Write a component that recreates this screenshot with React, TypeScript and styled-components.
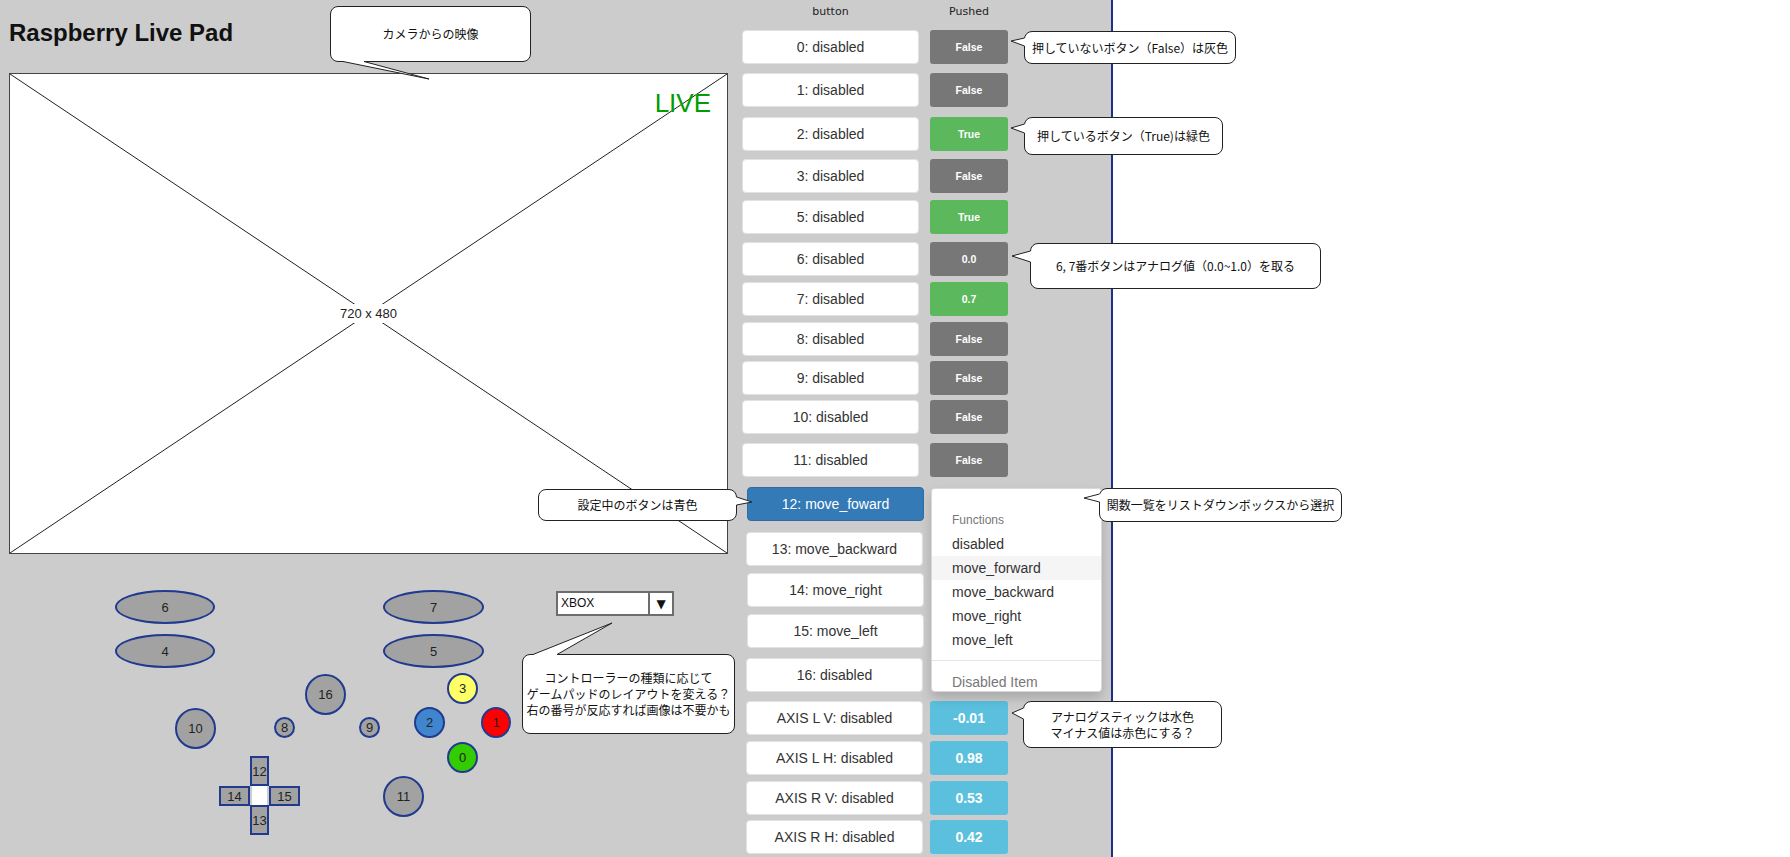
import React from "react";
import styled, { createGlobalStyle } from "styled-components";

const GlobalStyle = createGlobalStyle`
  html, body {
    margin: 0;
    padding: 0;
    background: #fff;
  }
  body {
    font-family: "Liberation Sans", Arial, sans-serif;
    overflow: hidden;
  }
`;

type Kind = "off" | "on" | "axis";
type Row = { label: string; mt: number; shift?: number; active?: boolean; value?: string; kind?: Kind };

const rows: Row[] = [
    { label: "0: disabled", mt: 11, value: "False", kind: "off" },
    { label: "1: disabled", mt: 9, value: "False", kind: "off" },
    { label: "2: disabled", mt: 10, value: "True", kind: "on" },
    { label: "3: disabled", mt: 8, value: "False", kind: "off" },
    { label: "5: disabled", mt: 7, value: "True", kind: "on" },
    { label: "6: disabled", mt: 8, value: "0.0", kind: "off" },
    { label: "7: disabled", mt: 6, value: "0.7", kind: "on" },
    { label: "8: disabled", mt: 6, value: "False", kind: "off" },
    { label: "9: disabled", mt: 5, value: "False", kind: "off" },
    { label: "10: disabled", mt: 5, value: "False", kind: "off" },
    { label: "11: disabled", mt: 9, value: "False", kind: "off" },
    { label: "12: move_foward", mt: 10, shift: 5, active: true },
    { label: "13: move_backward", mt: 11, shift: 4 },
    { label: "14: move_right", mt: 7, shift: 5 },
    { label: "15: move_left", mt: 7, shift: 5 },
    { label: "16: disabled", mt: 10, shift: 4 },
    { label: "AXIS L V: disabled", mt: 9, shift: 4, value: "-0.01", kind: "axis" },
    { label: "AXIS L H: disabled", mt: 6, shift: 4, value: "0.98", kind: "axis" },
    { label: "AXIS R V: disabled", mt: 6, shift: 4, value: "0.53", kind: "axis" },
    { label: "AXIS R H: disabled", mt: 5, shift: 4, value: "0.42", kind: "axis" },
];

const functions = ["disabled", "move_forward", "move_backward", "move_right", "move_left"];

type PadButton = { label: string; x: number; y: number; w: number; h: number; round: boolean; fill?: string };

// positions on the pad drawing, relative to the pad canvas
const padButtons: PadButton[] = [
    { label: "6", x: 106, y: 36, w: 100, h: 34, round: true },
    { label: "4", x: 106, y: 80, w: 100, h: 34, round: true },
    { label: "7", x: 374, y: 36, w: 101, h: 34, round: true },
    { label: "5", x: 374, y: 80, w: 101, h: 34, round: true },
    { label: "16", x: 296, y: 120, w: 41, h: 41, round: true },
    { label: "10", x: 166, y: 154, w: 41, h: 41, round: true },
    { label: "8", x: 265, y: 163, w: 21, h: 21, round: true },
    { label: "9", x: 350, y: 163, w: 21, h: 21, round: true },
    { label: "3", x: 438, y: 119, w: 31, h: 31, round: true, fill: "#ffff66" },
    { label: "2", x: 405, y: 153, w: 31, h: 31, round: true, fill: "#3f86cf" },
    { label: "1", x: 472, y: 153, w: 30, h: 31, round: true, fill: "#ff0000" },
    { label: "0", x: 438, y: 188, w: 31, h: 31, round: true, fill: "#33cc00" },
    { label: "11", x: 374, y: 222, w: 41, h: 41, round: true },
    { label: "12", x: 241, y: 202, w: 19, h: 30, round: false },
    { label: "14", x: 210, y: 232, w: 31, h: 20, round: false },
    { label: "15", x: 260, y: 232, w: 31, h: 20, round: false },
    { label: "13", x: 241, y: 251, w: 19, h: 30, round: false },
];

type Side = "left" | "right" | "top" | "bottom";
type Tail = { side: Side; a: number; b: number; tip: [number, number] };
type Note = { text: string; x: number; y: number; w: number; h: number; tail: Tail };

const notes: Note[] = [
    { text: "カメラからの映像", x: 330, y: 6, w: 201, h: 56, tail: { side: "bottom", a: 13, b: 34, tip: [99, 73] } },
    { text: "押していないボタン（False）は灰色", x: 1024, y: 31, w: 212, h: 33, tail: { side: "left", a: 7, b: 15, tip: [-13, 10] } },
    { text: "押しているボタン（True)は緑色", x: 1024, y: 117, w: 199, h: 38, tail: { side: "left", a: 7, b: 16, tip: [-13, 11] } },
    { text: "6, 7番ボタンはアナログ値（0.0~1.0）を取る", x: 1030, y: 243, w: 291, h: 46, tail: { side: "left", a: 8, b: 19, tip: [-18, 13] } },
    { text: "設定中のボタンは青色", x: 538, y: 489, w: 199, h: 32, tail: { side: "right", a: 8, b: 16, tip: [214, 13] } },
    { text: "関数一覧をリストダウンボックスから選択", x: 1099, y: 488, w: 243, h: 34, tail: { side: "left", a: 6, b: 14, tip: [-15, 10] } },
    {
        text: "コントローラーの種類に応じて\nゲームパッドのレイアウトを変える？\n右の番号が反応すれば画像は不要かも",
        x: 522, y: 654, w: 213, h: 80,
        tail: { side: "top", a: 11, b: 35, tip: [90, -31] },
    },
    { text: "アナログスティックは水色\nマイナス値は赤色にする？", x: 1023, y: 701, w: 199, h: 47, tail: { side: "left", a: 7, b: 18, tip: [-11, 12] } },
];

const pts = (list: number[][]) => list.map(p => p.join(",")).join(" ");

const NoteTail = ({ tail, w, h }: { tail: Tail; w: number; h: number }) => {
    let p1: number[], p2: number[], d: number[];
    if (tail.side === "left") { p1 = [0.5, tail.a]; p2 = [0.5, tail.b]; d = [2, 0]; }
    else if (tail.side === "right") { p1 = [w - 0.5, tail.a]; p2 = [w - 0.5, tail.b]; d = [-2, 0]; }
    else if (tail.side === "top") { p1 = [tail.a, 0.5]; p2 = [tail.b, 0.5]; d = [0, 2]; }
    else { p1 = [tail.a, h - 0.5]; p2 = [tail.b, h - 0.5]; d = [0, -2]; }
    const fill = [p1, tail.tip, p2, [p2[0] + d[0], p2[1] + d[1]], [p1[0] + d[0], p1[1] + d[1]]];
    return (
        <TailSvg width="1" height="1">
            <polygon points={pts(fill)} fill="#fff" />
            <polyline points={pts([p1, tail.tip, p2])} fill="none" stroke="#222" strokeWidth="1" />
        </TailSvg>
    );
};

const Callout = ({ note }: { note: Note }) => (
    <Bubble $x={note.x} $y={note.y} $w={note.w} $h={note.h}>
        <NoteTail tail={note.tail} w={note.w} h={note.h} />
        {note.text}
    </Bubble>
);

export default function App() {
    return (
        <Stage>
            <GlobalStyle />
            <Panel>
                <LeftCol>
                    <Title>Raspberry Live Pad</Title>
                    <VideoFrame>
                        <Cross viewBox="0 0 100 100" preserveAspectRatio="none">
                            <line x1="0" y1="0" x2="100" y2="100" stroke="#222" strokeWidth="1" vectorEffect="non-scaling-stroke" />
                            <line x1="100" y1="0" x2="0" y2="100" stroke="#222" strokeWidth="1" vectorEffect="non-scaling-stroke" />
                        </Cross>
                        <SizeLabel>720 x 480</SizeLabel>
                        <Live>LIVE</Live>
                    </VideoFrame>
                    <PadCanvas>
                        {padButtons.map(b => (
                            <PadShape key={b.label} $x={b.x} $y={b.y} $w={b.w} $h={b.h} $round={b.round} $fill={b.fill}>
                                {b.label}
                            </PadShape>
                        ))}
                        <DpadHole />
                        <PadSelect>
                            <SelectText>XBOX</SelectText>
                            <SelectArrow>▼</SelectArrow>
                        </PadSelect>
                    </PadCanvas>
                </LeftCol>
                <RightCol>
                    <HeaderRow>
                        <HeaderCell>button</HeaderCell>
                        <HeaderCell>Pushed</HeaderCell>
                    </HeaderRow>
                    {rows.map(r => (
                        <ButtonRow key={r.label} $mt={r.mt}>
                            <Label $shift={r.shift || 0} $active={!!r.active}>{r.label}</Label>
                            {r.value && <ValueBox $kind={r.kind || "off"}>{r.value}</ValueBox>}
                        </ButtonRow>
                    ))}
                    <Menu>
                        <MenuHeader>Functions</MenuHeader>
                        {functions.map(f => (
                            <MenuItem key={f} $hover={f === "move_forward"}>{f}</MenuItem>
                        ))}
                        <MenuDivider />
                        <MenuItem $disabled>Disabled Item</MenuItem>
                    </Menu>
                </RightCol>
            </Panel>
            {notes.map(n => <Callout key={n.text} note={n} />)}
        </Stage>
    );
}

const Stage = styled.div`
    position: relative;
    height: 857px;
    overflow: hidden;
    background: #fff;
`

const Panel = styled.div`
    box-sizing: border-box;
    width: 1113px;
    height: 100%;
    padding-left: 9px;
    background: #cccccc;
    border-right: 2px solid #1d2f86;
    display: grid;
    grid-template-columns: 719px 1fr;
    column-gap: 14px;
`

const LeftCol = styled.div`
    display: flex;
    flex-direction: column;
`

const Title = styled.h1`
    margin: 0;
    padding-top: 19px;
    font-family: "Liberation Sans", Arial, sans-serif;
    font-size: 24px;
    line-height: 28px;
    font-weight: bold;
    color: #111;
`

const VideoFrame = styled.div`
    position: relative;
    box-sizing: border-box;
    margin-top: 26px;
    width: 719px;
    height: 481px;
    background: #fff;
    border: 1px solid #444;
    display: flex;
    align-items: center;
    justify-content: center;
`

const Cross = styled.svg`
    position: absolute;
    inset: 0;
    width: 100%;
    height: 100%;
`

const SizeLabel = styled.span`
    position: relative;
    padding: 2px 4px;
    background: #fff;
    font-size: 13px;
    color: #222;
`

const Live = styled.span`
    position: absolute;
    top: 14px;
    right: 16px;
    font-size: 26px;
    line-height: 30px;
    color: #009e00;
`

const PadCanvas = styled.div`
    position: relative;
    flex: 1;
`

const PadShape = styled.div<{ $x: number; $y: number; $w: number; $h: number; $round: boolean; $fill?: string }>`
    position: absolute;
    left: ${p => p.$x}px;
    top: ${p => p.$y}px;
    width: ${p => p.$w}px;
    height: ${p => p.$h}px;
    box-sizing: border-box;
    border: 2px solid #1f3a8e;
    border-radius: ${p => (p.$round ? "50%" : "0")};
    background: ${p => p.$fill || "#a2a2a2"};
    display: flex;
    align-items: center;
    justify-content: center;
    font-size: 13px;
    color: #222;
`

const DpadHole = styled.div`
    position: absolute;
    left: 243px;
    top: 232px;
    width: 15px;
    height: 19px;
    background: #fff;
`

const PadSelect = styled.div`
    position: absolute;
    left: 547px;
    top: 37px;
    width: 118px;
    height: 25px;
    box-sizing: border-box;
    border: 2px solid #6d6d6d;
    background: #fff;
    display: flex;
`

const SelectText = styled.span`
    flex: 1;
    padding-left: 3px;
    font-size: 12px;
    line-height: 21px;
    color: #111;
`

const SelectArrow = styled.span`
    width: 22px;
    border-left: 2px solid #6d6d6d;
    display: flex;
    align-items: center;
    justify-content: center;
    font-family: "DejaVu Sans", sans-serif;
    font-size: 12px;
    color: #111;
`

const RightCol = styled.div`
    position: relative;
    display: flex;
    flex-direction: column;
    align-items: flex-start;
`

const HeaderRow = styled.div`
    display: grid;
    grid-template-columns: 177px 78px;
    column-gap: 11px;
    padding-top: 5px;
`

const HeaderCell = styled.span`
    text-align: center;
    font-family: "DejaVu Sans", sans-serif;
    font-size: 11px;
    line-height: 14px;
    color: #222;
`

const ButtonRow = styled.div<{ $mt: number }>`
    display: grid;
    grid-template-columns: 188px 78px;
    height: 34px;
    margin-top: ${p => p.$mt}px;
`

const Label = styled.div<{ $shift: number; $active: boolean }>`
    box-sizing: border-box;
    width: 177px;
    margin-left: ${p => p.$shift}px;
    border: 1px solid ${p => (p.$active ? "#2e6da4" : "#e2e2e2")};
    border-radius: 4px;
    background: ${p => (p.$active ? "#337ab7" : "#fff")};
    color: ${p => (p.$active ? "#fff" : "#333")};
    display: flex;
    align-items: center;
    justify-content: center;
    font-size: 14px;
`

const kindColors: Record<Kind, string> = {
    off: "#777777",
    on: "#5cb85c",
    axis: "#5bc0de",
};

const ValueBox = styled.div<{ $kind: Kind }>`
    width: 78px;
    height: 34px;
    border-radius: 3px;
    background: ${p => kindColors[p.$kind]};
    color: #fff;
    font-weight: bold;
    font-size: ${p => (p.$kind === "axis" ? "14px" : "10.5px")};
    display: flex;
    align-items: center;
    justify-content: center;
`

const Menu = styled.div`
    position: absolute;
    left: 189px;
    top: 488px;
    width: 171px;
    height: 204px;
    box-sizing: border-box;
    padding-top: 19px;
    background: #fff;
    border: 1px solid rgba(0, 0, 0, 0.15);
    border-radius: 4px;
    box-shadow: 0 6px 12px rgba(0, 0, 0, 0.175);
    overflow: hidden;
`

const MenuHeader = styled.div`
    padding: 0 20px;
    font-size: 12px;
    line-height: 24px;
    color: #777;
`

const MenuItem = styled.div<{ $hover?: boolean; $disabled?: boolean }>`
    padding: 0 20px;
    font-size: 14px;
    line-height: 24px;
    color: ${p => (p.$disabled ? "#777" : "#333")};
    background: ${p => (p.$hover ? "#f5f5f5" : "transparent")};
`

const MenuDivider = styled.div`
    height: 1px;
    margin: 8px 0 9px;
    background: #e5e5e5;
`

const Bubble = styled.div<{ $x: number; $y: number; $w: number; $h: number }>`
    position: absolute;
    left: ${p => p.$x}px;
    top: ${p => p.$y}px;
    width: ${p => p.$w}px;
    height: ${p => p.$h}px;
    box-sizing: border-box;
    background: #fff;
    border: 1px solid #222;
    border-radius: 8px;
    display: flex;
    align-items: center;
    justify-content: center;
    text-align: center;
    white-space: pre-line;
    font-family: "Noto Sans CJK JP", sans-serif;
    font-size: 12px;
    line-height: 16px;
    color: #111;
`

const TailSvg = styled.svg`
    position: absolute;
    left: -1px;
    top: -1px;
    overflow: visible;
`
